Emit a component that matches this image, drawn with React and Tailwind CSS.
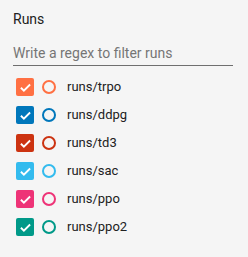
import React from "react";

const runs = [
  { name: "runs/trpo", color: "#ff7043" },
  { name: "runs/ddpg", color: "#0077bb" },
  { name: "runs/td3", color: "#cc3311" },
  { name: "runs/sac", color: "#33bbee" },
  { name: "runs/ppo", color: "#ee3377" },
  { name: "runs/ppo2", color: "#009988" },
];

const RunRow = ({ name, color }) => (
  <div className="flex items-center h-[28px]">
    <span
      className="w-[18px] h-[18px] rounded-[2px] flex items-center justify-center"
      style={{ backgroundColor: color }}
    >
      <svg width="13" height="13" viewBox="0 0 24 24" fill="none">
        <path d="M3.5 12.5l5.5 5.5L20.5 6.5" stroke="#fff" strokeWidth="3.4" />
      </svg>
    </span>
    <span
      className="ml-[8px] w-[14px] h-[14px] rounded-full border-2"
      style={{ borderColor: color }}
    />
    <span className="ml-[11px] text-[13px] leading-[16px] text-[#212121]">{name}</span>
  </div>
);

const App = () => {
  return (
    <div
      className="w-[248px] h-[257px] bg-[#f5f5f5] px-[13px] pt-[11px]"
      style={{ fontFamily: "Roboto, sans-serif" }}
    >
      <h3 className="text-[14px] leading-[16px] text-[#212121]">Runs</h3>
      <div className="mt-[16px] w-[220px] border-b border-[#6f6f6f] pb-[2px]">
        <input
          type="text"
          placeholder="Write a regex to filter runs"
          className="block w-full bg-transparent outline-none text-[14px] leading-[20px] placeholder-[#757575]"
        />
      </div>
      <div className="mt-[7px] pl-[3px]">
        {runs.map((r) => (
          <RunRow key={r.name} name={r.name} color={r.color} />
        ))}
      </div>
    </div>
  );
};

export default App;
